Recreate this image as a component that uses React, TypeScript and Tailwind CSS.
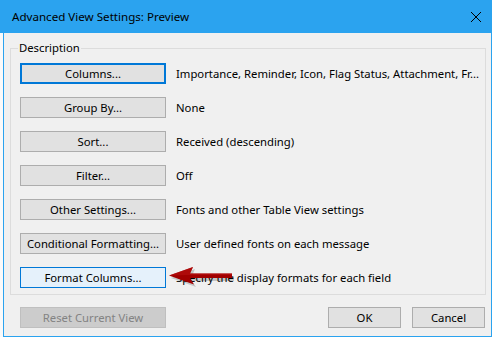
import React from "react";

const rows = [
  { label: "Columns...", text: "Importance, Reminder, Icon, Flag Status, Attachment, Fr...", focus: true },
  { label: "Group By...", text: "None" },
  { label: "Sort...", text: "Received (descending)" },
  { label: "Filter...", text: "Off" },
  { label: "Other Settings...", text: "Fonts and other Table View settings" },
  { label: "Conditional Formatting...", text: "User defined fonts on each message" },
  { label: "Format Columns...", text: "Specify the display formats for each field", hover: true },
];

function Btn({
  children,
  focus,
  hover,
  disabled,
  className = "",
}: {
  children: React.ReactNode;
  focus?: boolean;
  hover?: boolean;
  disabled?: boolean;
  className?: string;
}) {
  let look = "border border-[#adadad] bg-[#e1e1e1] text-black";
  if (focus) look = "border-2 border-[#0078d7] bg-[#e1e1e1] text-black";
  if (hover) look = "border border-[#0078d7] bg-[#e5f1fb] text-black";
  if (disabled) look = "border border-[#bfbfbf] bg-[#cccccc] text-[#838383]";
  return (
    <div className={`flex h-[21px] items-center justify-center whitespace-nowrap ${look} ${className}`}>
      {children}
    </div>
  );
}

function Arrow() {
  return (
    <svg
      className="absolute left-[166px] top-[264px]"
      width="72"
      height="26"
      viewBox="0 0 72 26"
    >
      <path
        d="M5 14 L29 5 L26 12 L68 12 L68 17 L26 17 L30 23 Z"
        fill="#000"
        opacity="0.18"
      />
      <path
        d="M3 11.5 L27 3 L24 9.5 L66 9.5 L66 14 L24 14 L28 20.5 Z"
        fill="#a10000"
      />
      <path d="M3 11.5 L27 3 L24 9.5 L66 9.5 L66 11 L22 11 Z" fill="#b81010" opacity="0.6" />
    </svg>
  );
}

export default function App() {
  return (
    <div
      className="relative h-[342px] w-[497px] overflow-hidden bg-white text-[11.3px] leading-none text-black"
      style={{ fontFamily: '"Segoe UI", "Noto Sans", sans-serif' }}
    >
      <div className="flex h-[337px] w-[492px] flex-col">
        {/* title bar */}
        <div className="flex h-[33px] items-center justify-between bg-[#2ba3ef] pl-[12px] pr-[10px]">
          <span className="text-[11.6px] text-black">Advanced View Settings: Preview</span>
          <svg width="12" height="12" viewBox="0 0 12 12">
            <path d="M1 1 L11 11 M11 1 L1 11" stroke="#000" strokeWidth="1" />
          </svg>
        </div>

        <div className="flex min-w-0 flex-1 bg-[#fafafa] pl-[3px]">
          <div className="flex min-w-0 flex-1 flex-col border-x border-b border-[#2ba3ef] bg-[#f0f0f0] pl-[6px] pr-[5px]">
            <fieldset className="mt-[7px] min-w-0 border border-[#dcdcdc] px-[9px] pb-[6px] pt-[7px]">
              <legend className="-ml-[2px] px-[1px] leading-[16px]">Description</legend>
              <div className="flex flex-col gap-[13px]">
                {rows.map((r) => (
                  <div key={r.label} className="flex items-center gap-[10px]">
                    <Btn focus={r.focus} hover={r.hover} className="w-[146px] shrink-0">
                      {r.label}
                    </Btn>
                    <span className="whitespace-nowrap">{r.text}</span>
                  </div>
                ))}
              </div>
            </fieldset>

            <div className="mt-[12px] flex items-center pl-[10px] pr-[1px]">
              <Btn disabled className="w-[146px]">
                Reset Current View
              </Btn>
              <div className="flex-1" />
              <Btn className="w-[73px]">OK</Btn>
              <Btn className="ml-[11px] w-[73px]">Cancel</Btn>
            </div>
          </div>
        </div>
      </div>
      <Arrow />
    </div>
  );
}
